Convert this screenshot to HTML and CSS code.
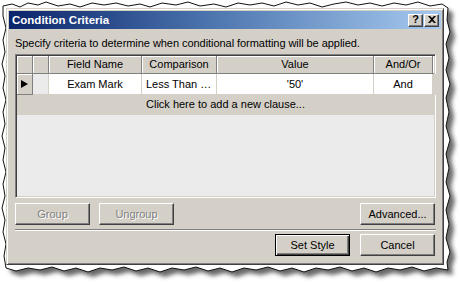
FILE: index.html
```html
<!DOCTYPE html>
<html>
<head>
<meta charset="utf-8">
<link rel="stylesheet" href="styles.css">
</head>
<body>
<div class="canvas">
  <svg class="paper" width="460" height="283" viewBox="0 0 460 283" aria-hidden="true">
    <defs>
      <filter id="blur" x="-10%" y="-10%" width="120%" height="120%">
        <feGaussianBlur stdDeviation="2"/>
      </filter>
    </defs>
    <path class="shadow" filter="url(#blur)" transform="translate(5,5)" d="M3,6 L12,4 L20,7 L28,3 L38,5 L46,2 L58,6 L70,4 L80,7 L92,3 L104,5 L116,3 L128,6 L140,4 L150,7 L162,3 L176,5 L188,2 L200,6 L214,4 L226,7 L238,3 L250,5 L262,3 L274,6 L286,2 L298,5 L310,3 L322,7 L334,4 L346,2 L358,5 L370,3 L382,6 L394,3 L406,5 L418,2 L430,6 L442,4 L448,8 L447,20 L450,32 L446,44 L449,58 L446,70 L450,84 L446,98 L449,112 L446,126 L450,140 L446,154 L449,168 L446,182 L450,196 L446,210 L449,224 L446,238 L450,252 L447,262 L448,270 L436,268 L424,271 L412,267 L400,270 L388,268 L376,272 L364,268 L352,271 L340,267 L328,270 L316,268 L304,272 L292,268 L280,271 L268,267 L256,270 L244,268 L232,272 L220,268 L208,271 L196,267 L184,270 L172,268 L160,272 L148,268 L136,271 L124,267 L112,270 L100,268 L88,272 L76,268 L64,271 L52,267 L40,270 L28,268 L16,271 L6,268 L4,256 L6,244 L3,232 L5,220 L2,208 L5,196 L3,184 L6,172 L3,160 L5,148 L2,136 L5,124 L3,112 L6,100 L3,88 L5,76 L2,64 L5,52 L3,40 L6,28 L3,16 Z"/>
    <path class="edge" d="M3,6 L12,4 L20,7 L28,3 L38,5 L46,2 L58,6 L70,4 L80,7 L92,3 L104,5 L116,3 L128,6 L140,4 L150,7 L162,3 L176,5 L188,2 L200,6 L214,4 L226,7 L238,3 L250,5 L262,3 L274,6 L286,2 L298,5 L310,3 L322,7 L334,4 L346,2 L358,5 L370,3 L382,6 L394,3 L406,5 L418,2 L430,6 L442,4 L448,8 L447,20 L450,32 L446,44 L449,58 L446,70 L450,84 L446,98 L449,112 L446,126 L450,140 L446,154 L449,168 L446,182 L450,196 L446,210 L449,224 L446,238 L450,252 L447,262 L448,270 L436,268 L424,271 L412,267 L400,270 L388,268 L376,272 L364,268 L352,271 L340,267 L328,270 L316,268 L304,272 L292,268 L280,271 L268,267 L256,270 L244,268 L232,272 L220,268 L208,271 L196,267 L184,270 L172,268 L160,272 L148,268 L136,271 L124,267 L112,270 L100,268 L88,272 L76,268 L64,271 L52,267 L40,270 L28,268 L16,271 L6,268 L4,256 L6,244 L3,232 L5,220 L2,208 L5,196 L3,184 L6,172 L3,160 L5,148 L2,136 L5,124 L3,112 L6,100 L3,88 L5,76 L2,64 L5,52 L3,40 L6,28 L3,16 Z"/>
  </svg>

  <div class="window">
    <div class="titlebar">
      <span class="title">Condition Criteria</span>
      <div class="caption-buttons">
        <span class="cap-btn">?</span>
        <span class="cap-btn close">
          <svg width="8" height="7" viewBox="0 0 8 7"><path d="M0,0 L2,0 L4,2 L6,0 L8,0 L5,3.5 L8,7 L6,7 L4,5 L2,7 L0,7 L3,3.5 Z" fill="#000"/></svg>
        </span>
      </div>
    </div>
    <div class="content">
      <div class="prompt">Specify criteria to determine when conditional formatting will be applied.</div>
      <div class="grid">
        <div class="row header">
          <div class="hcell"></div>
          <div class="hcell"></div>
          <div class="hcell">Field Name</div>
          <div class="hcell">Comparison</div>
          <div class="hcell">Value</div>
          <div class="hcell">And/Or</div>
          <div class="hcell filler"></div>
        </div>
        <div class="row data">
          <div class="rowhead"><span class="arrow"></span></div>
          <div class="rowsel"></div>
          <div class="cell center">Exam Mark</div>
          <div class="cell">Less Than …</div>
          <div class="cell center">'50'</div>
          <div class="cell center">And</div>
          <div class="cell blank"></div>
        </div>
        <div class="addrow">Click here to add a new clause...</div>
        <div class="empty"></div>
      </div>
      <div class="btnrow">
        <span class="btn disabled">Group</span>
        <span class="btn disabled">Ungroup</span>
        <span class="spacer"></span>
        <span class="btn">Advanced...</span>
      </div>
      <div class="separator"></div>
      <div class="btnrow bottom">
        <span class="spacer"></span>
        <span class="btn default">Set Style</span>
        <span class="btn">Cancel</span>
      </div>
    </div>
  </div>
</div>
</body>
</html>
```

FILE: styles.css
```css
* { box-sizing: border-box; }
html, body {
  margin: 0;
  padding: 0;
  background: #ffffff;
}
.canvas {
  position: relative;
  width: 460px;
  height: 283px;
  overflow: hidden;
  padding: 8px 0 0 6px;
  font-family: "Liberation Sans", Arial, sans-serif;
  font-size: 11px;
  color: #000;
}
.paper {
  position: absolute;
  left: 0;
  top: 0;
}
.paper .shadow { fill: #444; opacity: 0.8; }
.paper .edge { fill: #ffffff; stroke: #111; stroke-width: 1; }

.window {
  position: relative;
  width: 438px;
  height: 257px;
  background: #d4d0c8;
  border: 1px solid;
  border-color: #d4d0c8 #404040 #404040 #d4d0c8;
  box-shadow: inset 1px 1px 0 #ffffff, inset -1px -1px 0 #808080;
  padding: 2px;
  display: flex;
  flex-direction: column;
}
.titlebar {
  height: 18px;
  background: linear-gradient(to right, #0a246a 0%, #4a72ac 45%, #a6caf0 100%);
  display: flex;
  align-items: center;
  padding: 0 2px 0 3px;
}
.title {
  color: #fff;
  font-weight: bold;
  font-size: 11.5px;
  flex: 1;
}
.caption-buttons {
  display: flex;
  gap: 0;
}
.cap-btn {
  width: 15px;
  height: 13px;
  background: #d4d0c8;
  border: 1px solid;
  border-color: #ffffff #404040 #404040 #ffffff;
  box-shadow: inset -1px -1px 0 #808080;
  display: flex;
  align-items: center;
  justify-content: center;
  font-weight: bold;
  font-size: 11px;
  line-height: 1;
  padding-bottom: 1px;
}
.cap-btn.close { margin-left: 1px; }

.content {
  flex: 1;
  padding: 7px 5px 0 6px;
  display: flex;
  flex-direction: column;
}
.prompt {
  line-height: 14px;
  height: 14px;
  white-space: nowrap;
  letter-spacing: -0.05px;
}
.grid {
  margin-top: 4px;
  height: 144px;
  border: 1px solid;
  border-color: #808080 #ffffff #ffffff #808080;
  box-shadow: inset 1px 1px 0 #404040, inset -1px -1px 0 #d4d0c8;
  padding: 1px;
  display: flex;
  flex-direction: column;
  background: #ebebeb;
}
.row {
  display: grid;
  grid-template-columns: 16px 16px 93px 75px 157px 59px 1fr;
}
.header { height: 18px; }
.hcell {
  background: #d4d0c8;
  border-right: 1px solid #808080;
  border-bottom: 1px solid #808080;
  box-shadow: inset 1px 1px 0 #ffffff;
  text-align: center;
  line-height: 17px;
  white-space: nowrap;
}
.hcell.filler { border-right: none; }
.data { height: 21px; }
.rowhead {
  background: #d4d0c8;
  border-right: 1px solid #808080;
  border-bottom: 1px solid #808080;
  box-shadow: inset 1px 1px 0 #ffffff;
  display: flex;
  align-items: center;
  padding-left: 4px;
}
.arrow {
  width: 0;
  height: 0;
  border-top: 4px solid transparent;
  border-bottom: 4px solid transparent;
  border-left: 7px solid #000;
}
.rowsel {
  background: #ebebeb;
  border-right: 1px solid #d4d0c8;
  border-bottom: 1px solid #d4d0c8;
}
.cell {
  background: #ffffff;
  border-right: 1px solid #d4d0c8;
  border-bottom: 1px solid #d4d0c8;
  line-height: 20px;
  padding-left: 4px;
  white-space: nowrap;
  overflow: hidden;
}
.cell.center { text-align: center; padding-left: 0; }
.cell.blank { background: #d4d0c8; border-right: none; border-bottom: 1px solid #d4d0c8; }
.addrow {
  height: 20px;
  background: #d4d0c8;
  text-align: center;
  line-height: 19px;
  border-bottom: 1px solid #d4d0c8;
}
.empty { flex: 1; background: #ebebeb; }

.btnrow {
  margin-top: 5px;
  display: flex;
  gap: 9px;
  padding-right: 1px;
}
.btnrow.bottom { margin-top: 3px; gap: 10px; }
.spacer { flex: 1; }
.btn {
  width: 75px;
  height: 22px;
  background: #d4d0c8;
  border: 1px solid;
  border-color: #ffffff #404040 #404040 #ffffff;
  box-shadow: inset -1px -1px 0 #808080;
  display: flex;
  align-items: center;
  justify-content: center;
  padding-bottom: 1px;
}
.btn.default {
  border: 1px solid #000;
  box-shadow: inset 1px 1px 0 #ffffff, inset -1px -1px 0 #404040, inset -2px -2px 0 #808080;
}
.btn.disabled {
  color: #808080;
  text-shadow: 1px 1px 0 #ffffff;
}
.separator {
  margin-top: 4px;
  height: 2px;
  border-top: 1px solid #808080;
  border-bottom: 1px solid #ffffff;
}
```
